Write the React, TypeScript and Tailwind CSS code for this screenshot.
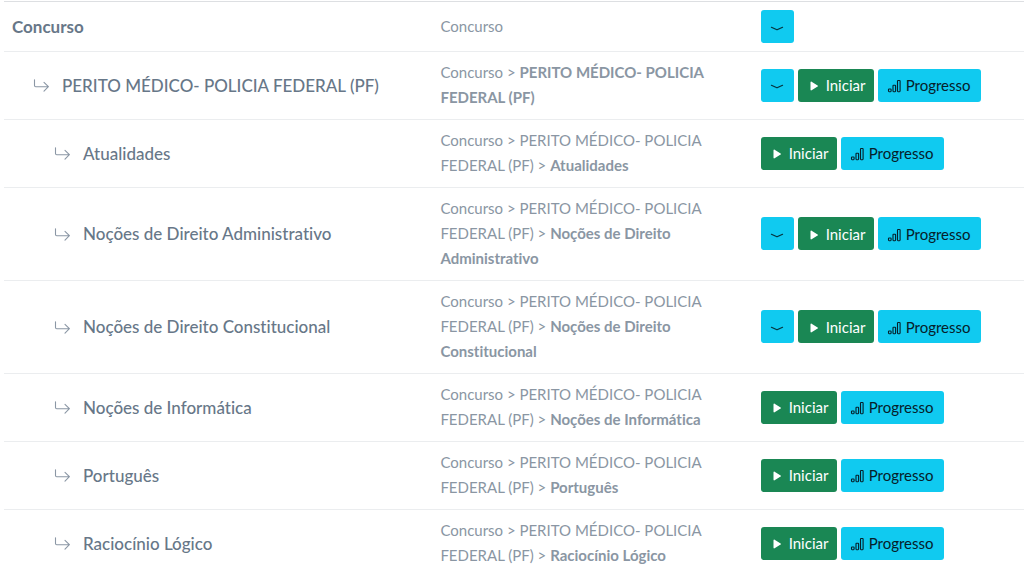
import clsx from 'clsx'

type Topic = {
  name: string
  level: number
  parents: string[]
  expandable?: boolean
}

const EXAM = 'PERITO MÉDICO- POLICIA FEDERAL (PF)'

const topics: Topic[] = [
  { name: 'Concurso', level: 0, parents: [], expandable: true },
  { name: EXAM, level: 1, parents: ['Concurso'], expandable: true },
  { name: 'Atualidades', level: 2, parents: ['Concurso', EXAM] },
  { name: 'Noções de Direito Administrativo', level: 2, parents: ['Concurso', EXAM], expandable: true },
  { name: 'Noções de Direito Constitucional', level: 2, parents: ['Concurso', EXAM], expandable: true },
  { name: 'Noções de Informática', level: 2, parents: ['Concurso', EXAM] },
  { name: 'Português', level: 2, parents: ['Concurso', EXAM] },
  { name: 'Raciocínio Lógico', level: 2, parents: ['Concurso', EXAM] },
]

function BranchIcon() {
  return (
    <svg className="w-4 h-4 shrink-0 text-[#8b97a5]" viewBox="0 0 16 16" fill="none" stroke="currentColor" strokeWidth="1.1" strokeLinecap="round" strokeLinejoin="round" aria-hidden="true">
      <path d="M1.5 2.7v5.8a1.2 1.2 0 0 0 1.2 1.2h12.5M11 5.3l4.4 4.4L11 14.1" />
    </svg>
  )
}

function ChevronIcon() {
  return (
    <svg className="w-4 h-4" viewBox="0 0 16 16" fill="none" stroke="currentColor" strokeWidth="1.1" strokeLinecap="round" strokeLinejoin="round" aria-hidden="true">
      <path d="M2.4 8.2 7.4 10.6q.6.3 1.2 0L13.6 8.2" />
    </svg>
  )
}

function PlayIcon() {
  return (
    <svg className="w-4 h-4" viewBox="0 0 16 16" fill="currentColor" aria-hidden="true">
      <path d="M4.5 5.3v7.4c0 .6.6.9 1.1.6l6-3.7c.5-.3.5-.9 0-1.2l-6-3.7c-.5-.3-1.1 0-1.1.6z" />
    </svg>
  )
}

function BarsIcon() {
  return (
    <svg className="w-4 h-4" viewBox="0 0 16 16" fill="none" stroke="currentColor" strokeWidth="1.1" aria-hidden="true">
      <rect x="2.5" y="12" width="2.6" height="2.7" rx=".6" />
      <rect x="7" y="8.2" width="2.6" height="6.5" rx=".6" />
      <rect x="11.5" y="3.5" width="2.6" height="11.2" rx=".6" />
    </svg>
  )
}

function TopicRow({ topic }: { topic: Topic }) {
  const { name, level, parents, expandable } = topic
  const cell = clsx('px-2 pt-2', level === 0 ? 'pb-2' : 'pb-[9px]')
  return (
    <tr className="border-b border-[#ebedef]">
      <th
        scope="row"
        className={clsx(
          cell,
          'text-left text-[17px] leading-[25px] text-[#677788]',
          level === 0 ? 'font-bold' : 'font-medium',
        )}
      >
        <div className={clsx('flex items-center', level === 1 && 'pl-[21px]', level === 2 && 'pl-[42px]')}>
          {level > 0 && <BranchIcon />}
          <span className={clsx(level > 0 && 'pl-[13px]')}>{name}</span>
        </div>
      </th>
      <td className={clsx(cell, 'text-[15px] leading-[25px] text-[#8a96a3]')}>
        {parents.map((parent) => parent + ' > ').join('')}
        {parents.length > 0 ? <b>{name}</b> : name}
      </td>
      <td className={cell}>
        <div className="flex gap-1 text-[15px] leading-5">
          {expandable && (
            <button type="button" aria-label={'Expandir ' + name} className="flex items-center justify-center w-[33px] h-[33px] rounded-[3px] bg-[#10caf0] text-[#06303a]">
              <ChevronIcon />
            </button>
          )}
          {level > 0 && (
            <>
              <button type="button" className="flex items-center gap-1 w-[76px] h-[33px] pl-2 rounded-[3px] bg-[#1a8754] text-white">
                <PlayIcon />
                Iniciar
              </button>
              <button type="button" className="flex items-center gap-1 w-[103px] h-[33px] pl-2 rounded-[3px] bg-[#10caf0] text-[#06202a]">
                <BarsIcon />
                Progresso
              </button>
            </>
          )}
        </div>
      </td>
    </tr>
  )
}

export default function App() {
  return (
    <main className="pl-1 pt-px bg-white font-[Lato,sans-serif] [font-variant-ligatures:none]">
      <table className="w-full table-fixed border-collapse border-t border-[#dddfe2]">
        <colgroup>
          <col className="w-[42%]" />
          <col className="w-[31.4%]" />
          <col />
        </colgroup>
        <tbody>
          {topics.map((topic) => (
            <TopicRow key={topic.name} topic={topic} />
          ))}
        </tbody>
      </table>
    </main>
  )
}
